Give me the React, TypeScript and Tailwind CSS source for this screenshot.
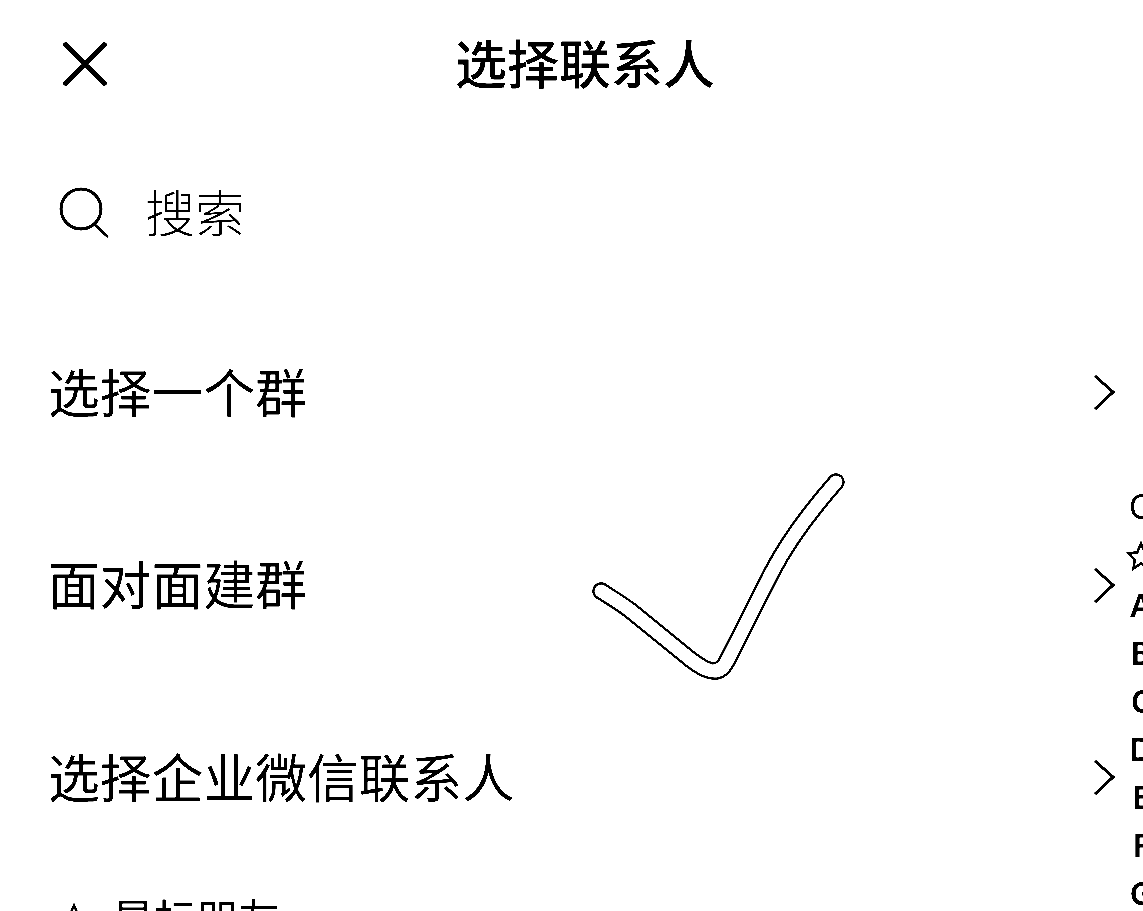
const rows = ["选择一个群", "面对面建群", "选择企业微信联系人"];
const letters = ["A", "B", "C", "D", "E", "F", "G"];

const checkPath =
  "M601 591 C612 598 622 604 631 611 L690 659 C703 669 718 679 727 661 L772 572 C788 541 808 514 836 482";

const Star = ({ size }: { size: number }) => (
  <svg width={size} height={size} viewBox="0 0 24 24" fill="none" stroke="black" strokeWidth="2">
    <path d="M12 2 L15 9 L22 10 L17 15 L18 22 L12 18 L6 22 L7 15 L2 10 L9 9 Z" />
  </svg>
);

const Chevron = () => (
  <svg width="24" height="40" viewBox="0 0 24 40" fill="none" stroke="black" strokeWidth="3">
    <path d="M3 2 L21 18 L3 35" />
  </svg>
);

const App = () => {
  return (
    <div className="relative w-[1143px] h-[911px] overflow-hidden bg-white text-black contrast-[6] font-['Noto_Sans_CJK_SC','Noto_Sans',sans-serif]">
      <header className="h-[128px] flex items-center pl-[62px]">
        <svg width="46" height="46" viewBox="0 0 46 46" fill="none" stroke="black" strokeWidth="4.5">
          <path d="M2 2 L44 44 M44 2 L2 44" />
        </svg>
        <h1 className="ml-[347px] mb-[5px] text-[52px] leading-none font-medium">选择联系人</h1>
      </header>

      <div className="h-[169px] flex items-center pl-[58px]">
        <svg width="54" height="54" viewBox="0 0 54 54" fill="none" stroke="black">
          <circle cx="23" cy="23" r="20" strokeWidth="3" />
          <path d="M36 38 L50 51" strokeWidth="2.5" />
        </svg>
        <span className="ml-[33px] mb-[5px] text-[50px] leading-none font-light">搜索</span>
      </div>

      {rows.map((row) => (
        <div key={row} className="h-[192.5px] flex items-center justify-between pl-[48px] pr-[27px]">
          <span className="mb-[5px] text-[51.8px] leading-none font-normal">{row}</span>
          <span className="mt-[2px]">
            <Chevron />
          </span>
        </div>
      ))}

      <div className="flex items-center pl-[60px] pt-[21px]">
        <Star size={28} />
        <span className="ml-[24px] text-[42px] leading-none font-normal">星标朋友</span>
      </div>

      {/* index bar, cut off by the right edge */}
      <div className="absolute left-[1116px] top-[482px] w-[50px] flex flex-col items-center text-[32px] leading-[48px] font-semibold font-['Noto_Sans',sans-serif]">
        <span className="font-normal text-[34px] mr-[3px]">C</span>
        <span className="h-[51px] flex items-center mr-[1px]">
          <Star size={30} />
        </span>
        {letters.map((l) => (
          <span key={l}>{l}</span>
        ))}
      </div>

      {/* check mark toast */}
      <svg className="absolute left-[585px] top-[465px]" width="270" height="225" viewBox="585 465 270 225" fill="none" strokeLinecap="round" strokeLinejoin="round">
        <path d={checkPath} stroke="black" strokeWidth="17.5" />
        <path d={checkPath} stroke="white" strokeWidth="13" />
      </svg>
    </div>
  );
};

export default App;
